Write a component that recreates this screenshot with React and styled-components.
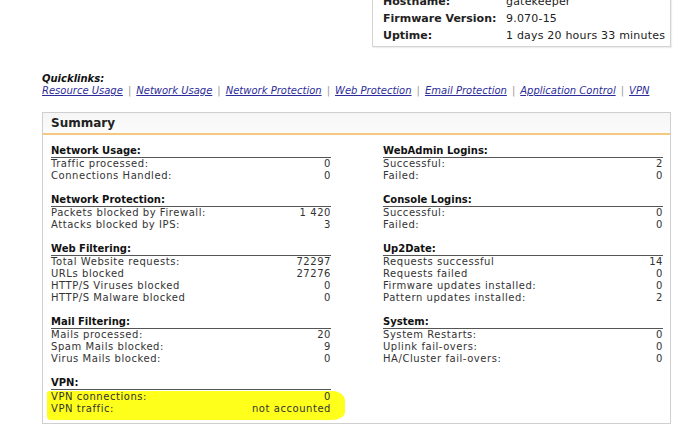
import React from 'react';
import styled, { createGlobalStyle } from 'styled-components';

const Global = createGlobalStyle`
  body {
    margin: 0;
    background: #fff;
    font-family: "DejaVu Sans", Verdana, sans-serif;
    color: #333;
  }
`;

const Page = styled.div`
  width: 683px;
  height: 428px;
  overflow: hidden;
`;

const TopRow = styled.div`
  display: flex;
  justify-content: flex-end;
  padding-right: 12px;
`;

const InfoBox = styled.div`
  width: 299px;
  margin-top: -8px;
  border: 1px solid #d4d4d4;
  border-top: none;
  padding: 1px 0 2px 10px;
  box-sizing: border-box;
  box-shadow: 1px 1px 1px #eee;
`;

const InfoRow = styled.div`
  display: flex;
  height: 17px;
  align-items: center;
  font-size: 11px;
  color: #222;
`;

const InfoLabel = styled.span`
  width: 123px;
  font-weight: bold;
`;

const InfoValue = styled.span`
  letter-spacing: 0.2px;
`;

const Quick = styled.div`
  margin: 26px 0 0 42px;
  font-size: 10px;
`;

const QuickTitle = styled.div`
  font-weight: bold;
  font-style: italic;
  color: #111;
  line-height: 12px;
`;

const LinkLine = styled.div`
  line-height: 12px;
  color: #999;
  font-style: italic;
`;

const Link = styled.a`
  color: #2c2c9a;
  text-decoration: underline;
`;

const Sep = styled.span`
  margin: 0 5px;
  font-style: normal;
`;

const Panel = styled.div`
  margin: 15px 12px 0 42px;
  border: 1px solid #cfcfcf;
`;

const PanelHead = styled.div`
  height: 20px;
  line-height: 21px;
  padding-left: 8px;
  font-size: 12px;
  font-weight: bold;
  color: #222;
  background: linear-gradient(#f6f6f6, #fbfbfb);
  border-bottom: 2px solid #f4c87e;
`;

const PanelBody = styled.div`
  display: grid;
  grid-template-columns: 280px 280px;
  column-gap: 52px;
  padding: 10px 8px 8px 8px;
`;

const Column = styled.div`
  display: flex;
  flex-direction: column;
  gap: 12px;
`;

const Section = styled.div``;

const SectionTitle = styled.div`
  font-size: 10px;
  font-weight: bold;
  color: #111;
  height: 12px;
  line-height: 12px;
  border-bottom: 1px solid #555;
`;

const Row = styled.div`
  display: flex;
  justify-content: space-between;
  font-size: 10px;
  letter-spacing: 0.55px;
  height: 12px;
  line-height: 12px;
  color: #333;
`;

const Highlight = styled.div`
  background: #ffff1c;
  margin: 1px -14px -5px -4px;
  padding: 0 14px 5px 4px;
  border-radius: 3px 12px 14px 4px / 2px 10px 8px 4px;
`;

const left = [
  { title: 'Network Usage:', rows: [['Traffic processed:', '0'], ['Connections Handled:', '0']] },
  { title: 'Network Protection:', rows: [['Packets blocked by Firewall:', '1 420'], ['Attacks blocked by IPS:', '3']] },
  {
    title: 'Web Filtering:',
    rows: [
      ['Total Website requests:', '72297'],
      ['URLs blocked', '27276'],
      ['HTTP/S Viruses blocked', '0'],
      ['HTTP/S Malware blocked', '0'],
    ],
  },
  {
    title: 'Mail Filtering:',
    rows: [['Mails processed:', '20'], ['Spam Mails blocked:', '9'], ['Virus Mails blocked:', '0']],
  },
  { title: 'VPN:', rows: [['VPN connections:', '0'], ['VPN traffic:', 'not accounted']], marked: true },
];

const right = [
  { title: 'WebAdmin Logins:', rows: [['Successful:', '2'], ['Failed:', '0']] },
  { title: 'Console Logins:', rows: [['Successful:', '0'], ['Failed:', '0']] },
  {
    title: 'Up2Date:',
    rows: [
      ['Requests successful', '14'],
      ['Requests failed', '0'],
      ['Firmware updates installed:', '0'],
      ['Pattern updates installed:', '2'],
    ],
  },
  {
    title: 'System:',
    rows: [['System Restarts:', '0'], ['Uplink fail-overs:', '0'], ['HA/Cluster fail-overs:', '0']],
  },
];

const links = [
  'Resource Usage',
  'Network Usage',
  'Network Protection',
  'Web Protection',
  'Email Protection',
  'Application Control',
  'VPN',
];

const Block = ({ title, rows, marked }) => {
  const list = rows.map(([k, v]) => (
    <Row key={k}>
      <span>{k}</span>
      <span>{v}</span>
    </Row>
  ));
  return (
    <Section>
      <SectionTitle>{title}</SectionTitle>
      {marked ? <Highlight>{list}</Highlight> : list}
    </Section>
  );
};

export default function App() {
  return (
    <Page>
      <Global />
      <TopRow>
        <InfoBox>
          <InfoRow>
            <InfoLabel>Hostname:</InfoLabel>
            <InfoValue>gatekeeper</InfoValue>
          </InfoRow>
          <InfoRow>
            <InfoLabel>Firmware Version:</InfoLabel>
            <InfoValue>9.070-15</InfoValue>
          </InfoRow>
          <InfoRow>
            <InfoLabel>Uptime:</InfoLabel>
            <InfoValue>1 days 20 hours 33 minutes</InfoValue>
          </InfoRow>
        </InfoBox>
      </TopRow>

      <Quick>
        <QuickTitle>Quicklinks:</QuickTitle>
        <LinkLine>
          {links.map((l, i) => (
            <React.Fragment key={l}>
              {i > 0 && <Sep>|</Sep>}
              <Link href="#">{l}</Link>
            </React.Fragment>
          ))}
        </LinkLine>
      </Quick>

      <Panel>
        <PanelHead>Summary</PanelHead>
        <PanelBody>
          <Column>
            {left.map((s) => (
              <Block key={s.title} {...s} />
            ))}
          </Column>
          <Column>
            {right.map((s) => (
              <Block key={s.title} {...s} />
            ))}
          </Column>
        </PanelBody>
      </Panel>
    </Page>
  );
}
